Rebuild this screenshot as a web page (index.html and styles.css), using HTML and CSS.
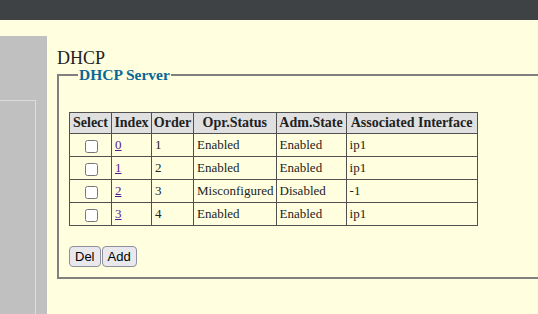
FILE: index.html
```html
<!DOCTYPE html>
<html>

<head>
    <meta charset="UTF-8">
    <title>DHCP</title>
    <link rel="stylesheet" href="styles.css">
</head>

<body>
    <div class="topbar"></div>
    <div class="layout">
        <!-- 左侧菜单 -->
        <div class="sidebar">
            <div class="sidebar-box"></div>
        </div>
        <div class="main">
            <h2 class="title">DHCP</h2>
            <fieldset class="group">
                <legend>DHCP Server</legend>
                <table class="list">
                    <tr>
                        <th class="c-select">Select</th>
                        <th class="c-index">Index</th>
                        <th class="c-order">Order</th>
                        <th class="c-opr">Opr.Status</th>
                        <th class="c-adm">Adm.State</th>
                        <th class="c-if">Associated Interface</th>
                    </tr>
                    <tr>
                        <td class="check"><input type="checkbox"></td>
                        <td><a href="#">0</a></td>
                        <td>1</td>
                        <td>Enabled</td>
                        <td>Enabled</td>
                        <td>ip1</td>
                    </tr>
                    <tr>
                        <td class="check"><input type="checkbox"></td>
                        <td><a href="#">1</a></td>
                        <td>2</td>
                        <td>Enabled</td>
                        <td>Enabled</td>
                        <td>ip1</td>
                    </tr>
                    <tr>
                        <td class="check"><input type="checkbox"></td>
                        <td><a href="#">2</a></td>
                        <td>3</td>
                        <td>Misconfigured</td>
                        <td>Disabled</td>
                        <td>-1</td>
                    </tr>
                    <tr>
                        <td class="check"><input type="checkbox"></td>
                        <td><a href="#">3</a></td>
                        <td>4</td>
                        <td>Enabled</td>
                        <td>Enabled</td>
                        <td>ip1</td>
                    </tr>
                </table>
                <div class="actions"><button>Del</button><button>Add</button></div>
            </fieldset>
        </div>
    </div>
</body>
</html>
```

FILE: styles.css
```css
* {
    margin: 0;
    padding: 0;
    box-sizing: border-box;
}

body {
    background-color: #ffffe0;
    font-family: "Liberation Serif", serif;
    color: #222;
    height: 314px;
    overflow: hidden;
}

.topbar {
    height: 20px;
    background-color: #3e4244;
}

.layout {
    display: flex;
    gap: 10px;
}

.sidebar {
    flex: 0 0 47px;
    height: 278px;
    margin-top: 16px;
    background-color: #c0c0c0;
}

.sidebar-box {
    width: 36px;
    height: 214px;
    margin-top: 64px;
    border-top: 1px solid #dcdce2;
    border-right: 1px solid #dcdce2;
}

.main {
    flex: 0 0 520px;
    padding-top: 28px;
}

.title {
    font-size: 18px;
    font-weight: normal;
    line-height: 20px;
}

.group {
    margin-top: -2px;
    border: 2px solid #808080;
    padding: 0 10px 10px;
    height: 213px;
}

.group legend {
    margin-left: 9px;
    padding: 0 1px;
    font-size: 15.5px;
    font-weight: bold;
    color: #0a6796;
}

.list {
    margin-top: 28px;
    border-collapse: collapse;
    font-size: 13px;
}

.list th,
.list td {
    border: 1px solid #505050;
    padding: 0 2px 0 3px;
    text-align: left;
}

.list th {
    height: 21px;
    padding: 0 1px;
    font-size: 14px;
    background-color: #e0e0e0;
    text-align: center;
}

.list td {
    height: 23px;
}

.list td.check {
    text-align: center;
}

.list td.check input {
    width: 13px;
    height: 13px;
    vertical-align: middle;
}

.list a {
    color: #551a8b;
}

.c-select { width: 42px; }
.c-index { width: 40px; }
.c-order { width: 42px; }
.c-opr { width: 82px; }
.c-adm { width: 70px; }
.c-if { width: 131px; }

.actions {
    display: flex;
    gap: 1px;
    margin-top: 20px;
}

.actions button {
    height: 21px;
    padding: 0 5px;
    font-family: "Liberation Sans", sans-serif;
    font-size: 13px;
    color: #000;
    background-color: #e9e9ed;
    border: 1px solid #8f8f9d;
    border-radius: 4px;
}
```
